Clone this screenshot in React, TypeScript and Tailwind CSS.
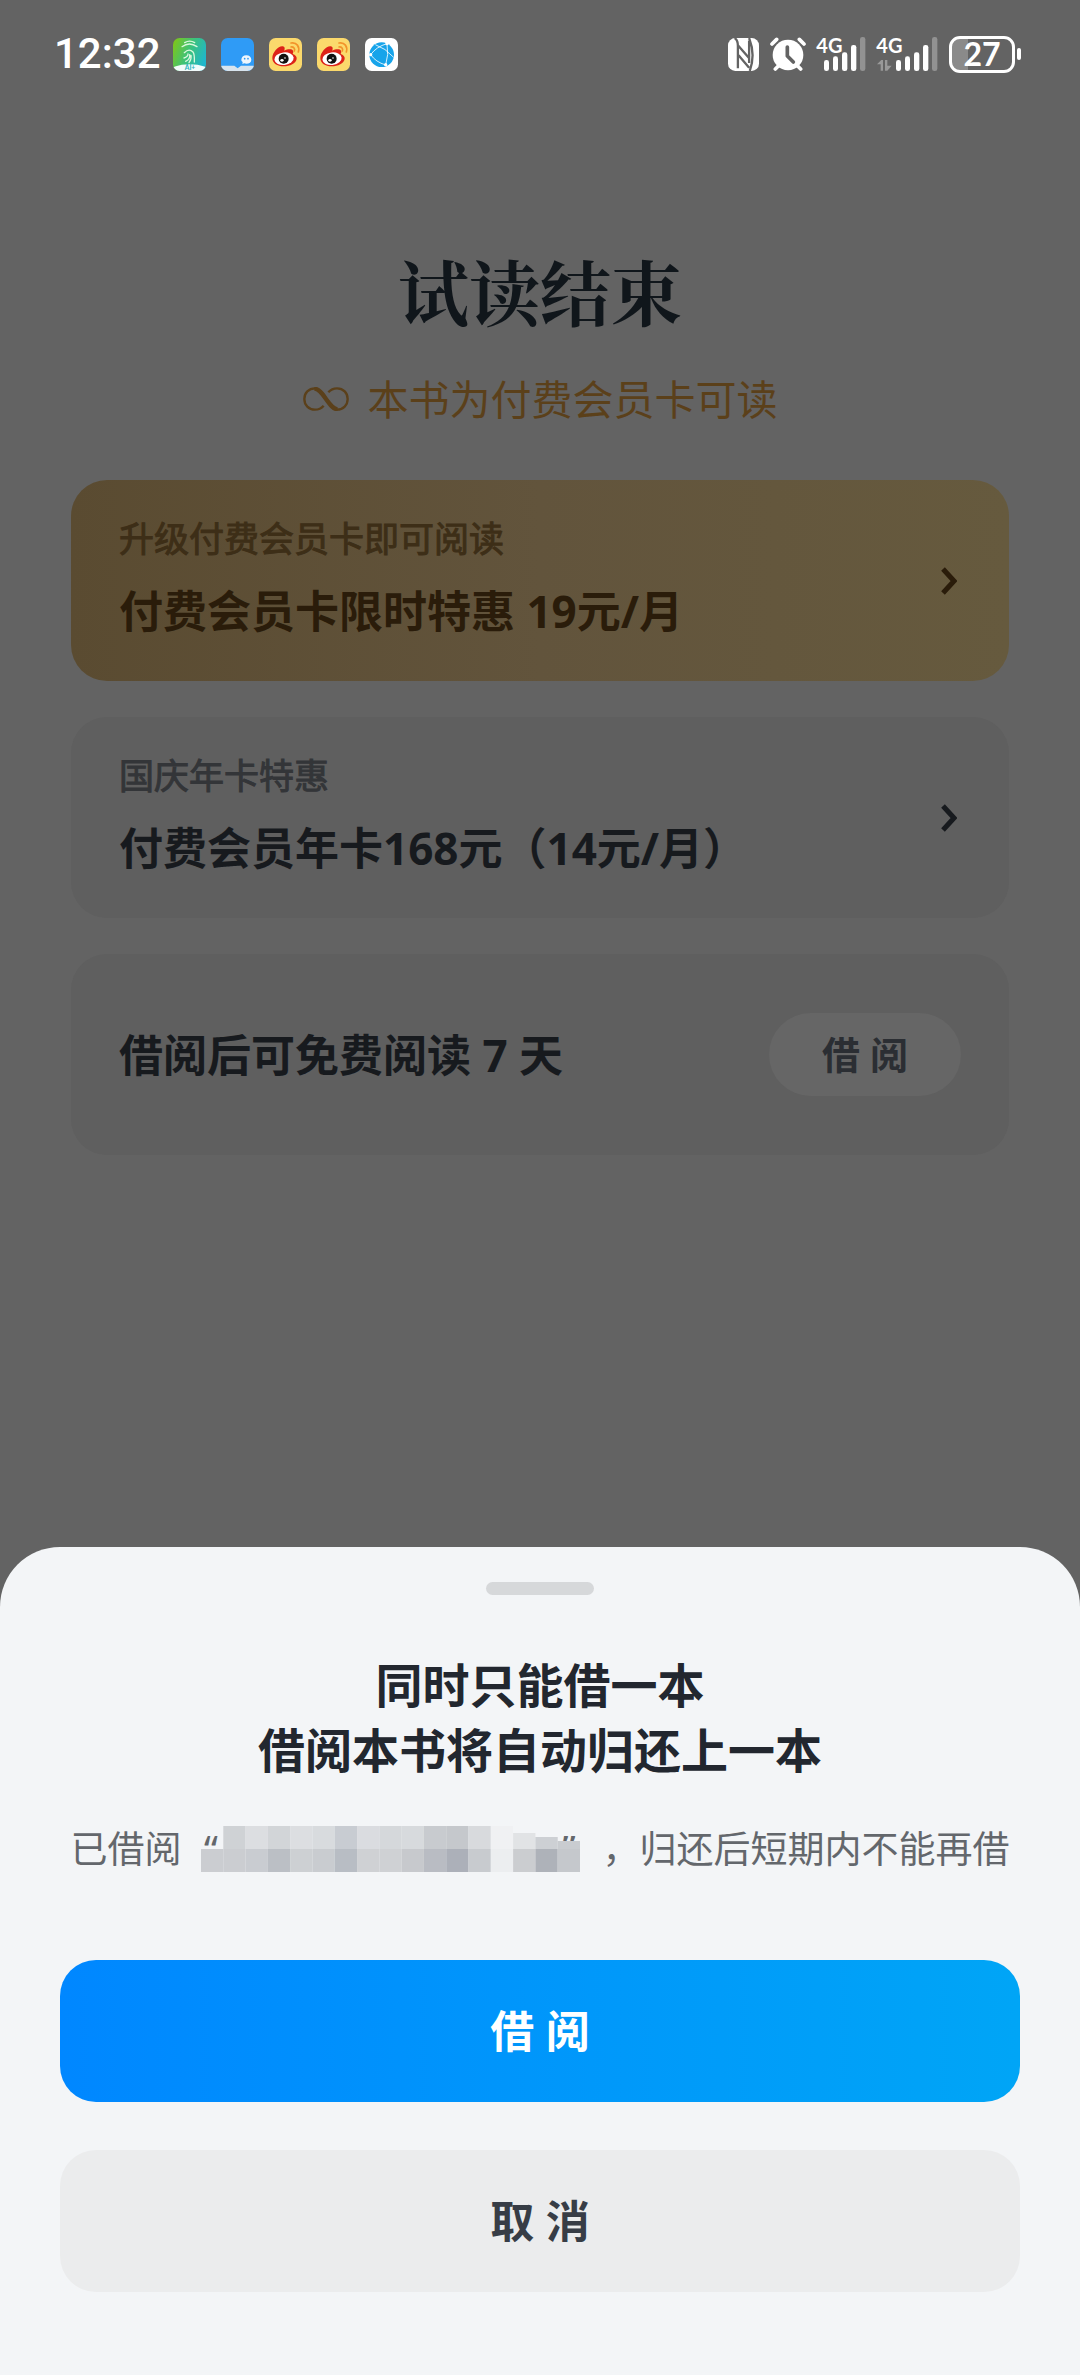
import React from 'react';

const FingerprintIcon: React.FC = () => (
    <svg viewBox="0 0 99 99" className="size-[33px]" aria-hidden="true">
        <defs>
            <linearGradient id="fp" x1="0" y1="0.2" x2="1" y2="0.6">
                <stop offset="0" stopColor="#7cc61c" />
                <stop offset="0.5" stopColor="#3cc27c" />
                <stop offset="1" stopColor="#1fb6cc" />
            </linearGradient>
            <clipPath id="fpClip"><rect width="99" height="99" rx="20" /></clipPath>
        </defs>
        <g clipPath="url(#fpClip)">
            <rect width="99" height="99" fill="url(#fp)" />
            <ellipse cx="50" cy="102" rx="62" ry="23" fill="#f2fbfb" />
            <g fill="none" stroke="#d9f8dc" strokeWidth="4" strokeLinecap="round">
                <path d="M35 14q15-9 30 0M27 26q22-16 45 0M33 60q12-4 12-12M34 44q14-14 26-2 5 6 4 30M38 70q14-6 12-20M54 52q2 12-6 22" />
            </g>
            <text x="51" y="96" textAnchor="middle" fontSize="20" fontWeight="700" fontFamily="Lato, sans-serif" fill="#2bb3bd">AI+</text>
        </g>
    </svg>
);

const ChatIcon: React.FC = () => (
    <svg viewBox="0 0 99 99" className="size-[33px]" aria-hidden="true">
        <defs>
            <clipPath id="chatClip"><rect width="99" height="99" rx="20" /></clipPath>
        </defs>
        <g clipPath="url(#chatClip)">
            <rect width="99" height="99" fill="#2f9bf6" />
            <path d="M0 83h40l10 8 10-8h39v16H0z" fill="#d8e4ee" />
            <path d="M76 52c9 0 15 6 15 13 0 8-6 12-15 12-2 0-4 0-6-1l-6 2 1-6c-3-2-4-4-4-7 0-7 6-13 15-13z" fill="#eef6fd" />
            <circle cx="71" cy="62" r="2.5" fill="#2f9bf6" />
            <circle cx="81" cy="62" r="2.5" fill="#2f9bf6" />
        </g>
    </svg>
);

const WeiboIcon: React.FC = () => (
    <svg viewBox="0 0 99 99" className="size-[33px]" aria-hidden="true">
        <rect width="99" height="99" rx="20" fill="#fbd96c" />
        <path d="M10 60C10 43 29 23 41 25c7 1 7 7 5 13 9-5 23-6 26 0 2 4 0 7-1 10 8 3 13 8 12 15-2 13-20 22-39 22C25 85 10 76 10 60z" fill="#dd2218" />
        <ellipse cx="45" cy="62" rx="29" ry="19" fill="#fff" transform="rotate(-7 45 62)" />
        <circle cx="44" cy="62" r="15" fill="#111" />
        <ellipse cx="39" cy="67" rx="5" ry="4" fill="#fff" />
        <circle cx="48" cy="60" r="2.5" fill="#fff" />
        <path d="M66 15c17-3 27 11 22 27M66 27c8-1 13 5 10 12" fill="none" stroke="#f2932a" strokeWidth="5" strokeLinecap="round" />
    </svg>
);

const BrowserIcon: React.FC = () => (
    <svg viewBox="0 0 99 99" className="size-[33px]" aria-hidden="true">
        <rect width="99" height="99" rx="20" fill="#fff" />
        <circle cx="50" cy="50" r="37" fill="#17a4ea" />
        <g fill="none" stroke="#fff" strokeWidth="2.5">
            <path d="M17 50Q34 26 66 17Q72 50 62 81Q32 72 17 50zM31 20q30 10 55 38" />
        </g>
        <g fill="#fff">
            <circle cx="17" cy="50" r="5" />
            <circle cx="66" cy="17" r="5" />
            <circle cx="62" cy="80" r="5" />
        </g>
    </svg>
);

const NfcIcon: React.FC = () => (
    <svg viewBox="0 0 94 100" className="h-[33px] w-[31px]" aria-hidden="true">
        <rect width="94" height="100" rx="22" fill="#fff" />
        <g fill="none" stroke="#636363" strokeWidth="7">
            <path d="M20 0Q30 6 30 24V92M30 22L65 62M32 52L64 90M64 76V8M64 0Q84 50 66 100" />
        </g>
    </svg>
);

const AlarmIcon: React.FC = () => (
    <svg viewBox="0 0 108 102" className="h-[34px] w-[36px]" aria-hidden="true">
        <circle cx="54" cy="54" r="46" fill="#fff" />
        <g fill="none" stroke="#fff" strokeWidth="11" strokeLinecap="round">
            <path d="M6 21L20 7M88 7l14 14M16 96l12-12M92 96L80 84" />
        </g>
        <path d="M52 30v27l18 18" fill="none" stroke="#636363" strokeWidth="11" strokeLinecap="round" strokeLinejoin="round" />
    </svg>
);

const SignalIcon: React.FC<{ data?: boolean }> = ({ data = false }) => (
    <svg viewBox={data ? '0 0 183 102' : '0 0 147 102'} className={data ? 'h-[34px] w-[61px] overflow-visible' : 'h-[34px] w-[49px] overflow-visible'} aria-hidden="true">
        <text x="-2" y="47" fontSize="60" fontWeight="700" fontFamily="Lato, sans-serif" fill="#fff">4G</text>
        {data && <path d="M0 82l13-13h5v32h-7V82zM24 69h7v17h13L31 101h-7z" fill="#999" />}
        <g transform={data ? 'translate(36 0)' : undefined} fill="#fff">
            <rect x="21" y="69" width="15" height="33" rx="7" />
            <rect x="48" y="58" width="15" height="44" rx="7" />
            <rect x="75" y="46" width="16" height="56" rx="7" />
            <rect x="102" y="24" width="16" height="78" rx="7" />
            <rect x="129" y="0" width="16" height="102" rx="7" fill="#929292" />
        </g>
    </svg>
);

const StatusBar: React.FC = () => (
    <header className="flex h-[108px] items-center justify-between pr-[59px] pl-[54px] text-white">
        <div className="flex items-center gap-3">
            <span className="font-['Roboto',sans-serif] text-[42px] leading-[44px] font-medium">12:32</span>
            <div className="flex items-center gap-[15px]">
                <FingerprintIcon />
                <ChatIcon />
                <WeiboIcon />
                <WeiboIcon />
                <BrowserIcon />
            </div>
        </div>
        <div className="flex items-center gap-[11px]">
            <NfcIcon />
            <AlarmIcon />
            <SignalIcon />
            <SignalIcon data />
            <div className="flex items-center gap-[2px]">
                <div className="flex h-[37px] w-[66px] items-center justify-center rounded-[11px] border-3 border-white bg-linear-to-r from-[#8a8a8a] from-27% to-transparent to-27% font-['Lato',sans-serif] text-[32px] leading-[32px] font-bold">27</div>
                <div className="h-[12px] w-[4px] rounded-full bg-white" />
            </div>
        </div>
    </header>
);

const Chevron: React.FC = () => (
    <svg viewBox="0 0 16 28" className="mr-1 h-7 w-4" fill="none" stroke="currentColor" strokeWidth="5" aria-hidden="true">
        <path d="M2 2l11 12L2 26" />
    </svg>
);

const InfinityIcon: React.FC = () => (
    <svg viewBox="0 0 138 72" className="h-6 w-[46px]" fill="none" stroke="currentColor" aria-hidden="true">
        <path d="M62 56C55 64 46 68 36 68 17 68 4 54 4 36S17 4 36 4" strokeWidth="7" />
        <path d="M34 5C60 5 78 67 104 67" strokeWidth="13" />
        <path d="M102 68c19 0 32-14 32-32S121 4 102 4c-10 0-19 4-26 12" strokeWidth="7" />
    </svg>
);

interface OfferCardProps {
    label: string;
    title: string;
    cardClass: string;
    labelClass: string;
    titleClass: string;
}

const OfferCard: React.FC<OfferCardProps> = ({ label, title, cardClass, labelClass, titleClass }) => (
    <a href="#" className={`flex h-[201px] items-center justify-between rounded-[36px] px-12 ${cardClass}`}>
        <span className="flex flex-col pb-1">
            <span className={`text-[35px] leading-[64px] [-webkit-text-stroke:1px] ${labelClass}`}>{label}</span>
            <span className={`text-[44px] leading-[80px] font-bold ${titleClass}`}>{title}</span>
        </span>
        <span className={titleClass}><Chevron /></span>
    </a>
);

// Two rows of blurred-out cells that hide the book title
const MOSAIC = [
    ['', '#cfd2d5', '#dcdee1', '#d2d5d8', '#dcdee1', '#d8dbde', '#c8ccd2', '#dadce0', '#d5d8db', '#d7dadd', '#c8cbcf', '#c5c8cc', '#d8dadd', '#f0f1f3', '#e1e3e5', '#cdd0d4', '#c9ccd0'],
    ['#cbcdd1', '#cbcdd1', '#c9ccd1', '#bbbfc5', '#cdd0d3', '#c9ccd0', '#b8bdc4', '#cfd1d4', '#cfd1d4', '#c7c9cd', '#b9bcc3', '#acb0b9', '#c8cbcf', '#eceef0', '#cbcdd0', '#aeb2b9', '#c5c8cc'],
];

const HiddenTitle: React.FC = () => (
    <svg viewBox="0 0 374 46" className="mr-[23px] ml-[19px] h-[46px] w-[379px] overflow-visible" preserveAspectRatio="none" aria-hidden="true">
        <text x="3" y="37" fontSize="38" fontFamily="Noto Sans, sans-serif" fill="#63676c">“</text>
        <text x="356" y="37" fontSize="38" fontFamily="Noto Sans, sans-serif" fill="#63676c">”</text>
        {MOSAIC.map((row, y) =>
            row.map((fill, x) => {
                const top = y === 0 && x > 13 ? 7 + (x - 14) * 4 : y * 23;
                return fill && <rect key={`${y}-${x}`} x={x * 22} y={top} width="22" height={(y + 1) * 23 - top} fill={fill} />;
            })
        )}
    </svg>
);

const App: React.FC = () => {
    return (
        <div className="flex min-h-screen flex-col bg-[#636363] font-['Noto_Sans','Noto_Sans_CJK_SC',sans-serif]">
            <StatusBar />
            <main className="flex flex-col px-[71px] pt-[133px]">
                <h1 className="text-center font-['Noto_Serif_CJK_SC','Noto_Sans_CJK_SC',serif] text-[71px] leading-[96px] font-bold text-[#10161b]">试读结束</h1>
                <p className="mt-[30px] flex items-center justify-center gap-[19px] text-[41px] leading-[64px] text-[#5b401a]">
                    <InfinityIcon />
                    本书为付费会员卡可读
                </p>
                <div className="mt-[49px] flex flex-col gap-9">
                    <OfferCard
                        label="升级付费会员卡即可阅读"
                        title="付费会员卡限时特惠 19元/月"
                        cardClass="bg-linear-to-r from-[#5a4b31] via-[#62543c] to-[#665a3e]"
                        labelClass="text-[#3d2e17]"
                        titleClass="text-[#2a1c0a]"
                    />
                    <OfferCard
                        label="国庆年卡特惠"
                        title="付费会员年卡168元（14元/月）"
                        cardClass="bg-[#5f5f5f]"
                        labelClass="text-[#333538]"
                        titleClass="text-[#171a1e]"
                    />
                    <section className="flex h-[201px] items-center justify-between rounded-[36px] bg-[#5f5f5f] px-12">
                        <h2 className="text-[44px] leading-[80px] font-bold text-[#171a1e]">借阅后可免费阅读 7 天</h2>
                        <button type="button" className="h-[83px] w-[192px] rounded-full bg-[#666666] text-[38px] font-bold text-[#2b2e33]">借 阅</button>
                    </section>
                </div>
            </main>
            <section role="dialog" aria-labelledby="sheet-title" className="mt-auto flex flex-col rounded-t-[60px] bg-[#f3f5f7] px-[60px] pt-[35px] pb-[83px]">
                <div className="h-[13px] w-[108px] self-center rounded-full bg-[#d6d8da]" />
                <h2 id="sheet-title" className="mt-[58px] text-center text-[47px] leading-[65px] font-bold text-[#22272f]">
                    同时只能借一本
                    <br />
                    借阅本书将自动归还上一本
                </h2>
                <p className="mt-[34px] flex items-center justify-center text-[37px] leading-[64px] whitespace-nowrap text-[#63676c]">
                    已借阅
                    <HiddenTitle />
                    ，归还后短期内不能再借
                </p>
                <button type="button" className="mt-[79px] h-[142px] rounded-[36px] bg-linear-to-r from-[#0087ff] to-[#00a5f6] text-[44px] font-bold text-white">借 阅</button>
                <button type="button" className="mt-12 h-[142px] rounded-[36px] bg-[#ebeced] text-[44px] font-bold text-[#373d46]">取 消</button>
            </section>
        </div>
    );
};

export default App;
